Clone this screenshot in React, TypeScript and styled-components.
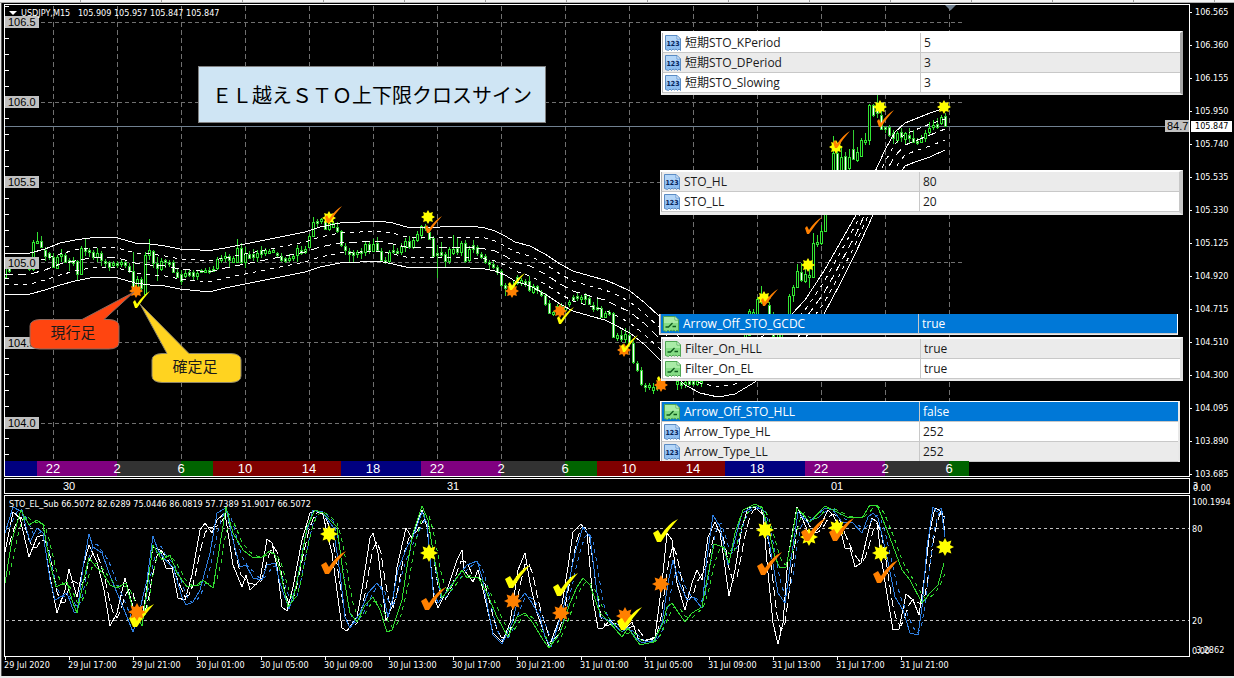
import React from 'react';
import styled, { createGlobalStyle } from 'styled-components';

const uiFont = '"DejaVu Sans Condensed", "DejaVu Sans", "Noto Sans", sans-serif';
const labelFont = '"Liberation Sans", Arial, sans-serif';
const tableFont = '"Open Sans", "Noto Sans CJK JP", sans-serif';
const jpFont = '"Noto Sans CJK JP", sans-serif';

const GlobalStyle = createGlobalStyle`
  *, *::before, *::after { box-sizing: border-box; }
  body { margin: 0; background: #e8e8e8; }
`;

/* ---------- price data: x, high, body top, body bottom, low, 1 = rising ---------- */

const candleData = `
5 268 268 277 278 1;9 268 268 271 273 0;29 266 267 269 271 0;33 240 242 269 271 1;37 232 241 243 244 1;41 236 241 247 248 0;45 247 250 256 261 0;49 252 253 257 260 0;
53 253 257 267 268 0;57 255 257 268 269 1;61 249 254 256 262 1;65 253 255 262 263 0;69 258 260 262 271 0;73 257 260 263 266 0;77 260 261 274 281 0;81 246 248 274 275 1;
85 239 248 251 256 0;89 248 250 252 257 0;93 250 252 257 260 0;97 248 253 257 262 1;101 251 253 260 266 0;105 259 261 263 267 0;109 261 262 267 271 0;113 261 263 265 268 1;
117 261 263 265 268 0;121 260 262 264 267 1;125 260 262 265 268 0;129 263 266 271 273 0;133 252 271 287 289 0;137 276 279 287 290 1;141 277 279 288 292 0;145 252 255 294 295 1;
149 239 250 255 260 1;153 250 251 263 268 0;157 257 263 268 281 0;161 258 261 269 271 1;165 259 260 262 268 0;169 260 262 264 267 0;173 260 262 272 273 0;177 269 272 277 278 0;
181 270 274 281 285 0;185 270 273 276 278 1;189 270 272 275 277 0;193 270 272 276 280 0;197 271 273 276 280 1;201 269 270 272 273 0;205 268 270 272 273 1;209 267 270 272 274 0;
213 266 269 271 272 1;217 257 259 268 270 1;221 255 258 260 263 1;225 252 256 258 262 1;229 254 256 260 267 0;233 256 258 262 263 1;237 239 248 262 263 1;241 243 248 262 265 0;
245 247 253 262 268 1;249 251 254 258 259 0;253 249 254 257 261 0;257 250 253 257 262 1;261 246 250 254 258 0;265 248 250 253 256 1;269 249 251 253 254 1;273 249 250 252 253 1;
277 252 253 255 258 0;281 253 256 260 262 0;285 257 258 261 263 0;289 254 258 260 262 1;293 255 256 258 261 1;297 245 248 255 262 1;301 246 250 253 255 0;305 246 249 252 254 1;
309 234 236 247 248 1;313 217 222 236 237 1;317 219 221 223 228 0;321 218 219 221 224 1;325 217 221 229 230 0;329 219 223 229 231 1;333 221 223 227 228 1;337 222 227 231 233 0;
341 230 231 245 247 0;345 243 246 250 255 0;349 248 251 254 263 0;353 250 252 255 262 0;357 250 252 254 258 1;361 248 251 253 259 0;365 242 244 252 256 1;369 241 244 250 254 0;
373 239 244 251 252 1;377 237 243 250 252 0;381 248 251 260 261 0;385 257 260 262 264 0;389 250 252 261 264 1;393 244 250 252 254 0;397 248 251 253 254 0;401 243 246 252 255 1;
405 238 241 247 252 1;409 236 241 247 249 0;413 238 240 247 249 1;417 231 234 240 242 1;421 225 226 235 239 1;425 224 226 228 231 0;429 228 232 239 240 0;433 236 238 256 257 0;
437 245 253 255 278 0;441 242 252 255 258 0;445 252 254 261 268 0;449 247 249 261 264 1;453 235 249 253 255 1;457 237 248 252 255 0;461 241 243 252 256 1;465 240 243 261 263 0;
469 246 249 260 262 1;473 240 245 249 253 0;477 245 247 253 256 0;481 252 254 257 259 0;485 254 256 262 264 0;489 260 262 264 269 0;493 261 264 267 269 0;497 265 267 272 275 0;
501 269 271 285 287 0;505 283 285 288 296 0;509 284 286 289 290 1;513 281 285 288 290 1;517 275 277 283 285 0;521 278 280 283 286 1;525 279 281 284 287 0;529 276 281 290 292 0;
533 284 286 292 294 1;537 285 286 290 294 0;541 290 292 295 297 0;545 293 295 304 306 0;549 300 303 313 314 0;553 311 312 314 316 1;557 304 306 312 314 1;561 303 306 312 314 0;565 305 307 310 312 1;
569 300 302 304 307 1;573 295 297 300 302 0;577 293 296 298 301 0;581 295 297 299 303 1;585 293 295 299 305 0;589 295 298 304 305 0;593 302 305 309 312 0;597 298 307 309 311 0;
601 306 308 317 318 0;605 311 313 317 318 1;609 310 312 314 316 0;613 312 313 337 338 0;617 333 335 338 341 1;621 330 335 339 342 0;625 328 334 339 343 1;629 330 335 343 345 0;
633 341 343 362 364 0;637 361 363 370 372 0;641 367 370 384 386 0;645 383 385 387 392 0;649 383 385 387 390 1;653 383 387 390 394 1;657 384 386 388 391 1;
677 379 381 384 390 1;681 379 382 385 389 0;685 380 382 384 388 1;689 379 381 384 386 0;693 379 381 384 386 0;697 379 381 384 386 1;701 379 381 383 387 1;
745 333 334 338 339 1;749 309 311 335 336 1;753 309 312 314 316 1;757 297 299 314 316 1;761 286 294 300 304 1;769 302 305 316 320 0;773 312 314 336 338 0;778 333 334 338 339 1;
781 333 334 338 339 1;789 294 296 314 316 1;793 285 287 295 302 1;797 264 271 287 288 1;801 263 272 280 282 0;805 269 274 281 283 1;809 269 275 277 288 1;813 233 243 277 278 1;
817 235 242 244 247 1;821 225 231 243 245 1;825 214 214 231 232 1;833 136 153 172 172 1;837 148 153 172 172 0;841 146 157 172 172 1;845 152 156 172 172 0;849 149 157 168 172 1;853 130 149 159 160 0;
857 147 152 160 162 1;861 138 140 156 157 1;865 133 140 142 145 1;869 104 105 140 145 1;873 104 105 115 117 0;877 95 105 113 118 0;881 110 115 129 130 0;885 126 127 129 133 0;
889 125 127 135 137 0;893 130 133 138 144 0;897 131 133 140 143 1;901 128 132 137 142 0;905 132 133 139 145 1;909 128 135 138 143 0;913 130 138 142 143 0;917 138 141 143 145 0;
921 135 138 142 143 1;925 130 133 138 142 1;929 122 128 132 135 1;933 120 125 127 130 1;937 118 124 127 129 0;941 115 117 123 125 1;945 113 116 126 127 0`;

const candles = candleData.split(';').map((c) => c.trim().split(' ').map(Number));

/* envelope: x, upper edge, lower edge */
const envelope = [
  [5, 253, 294], [30, 253, 294], [45, 249, 290], [60, 243, 285], [75, 240, 281], [90, 238, 278], [105, 237, 277],
  [118, 238, 278], [135, 243, 283], [150, 244, 285], [165, 246, 286], [180, 249, 289], [200, 250, 291], [213, 250, 291],
  [225, 248, 288], [245, 244, 284], [265, 240, 280], [285, 236, 276], [305, 232, 272], [320, 227, 267], [340, 223, 263],
  [360, 222, 262], [378, 221, 261], [393, 223, 264], [410, 228, 268], [440, 227, 267], [470, 226, 268], [485, 228, 269],
  [495, 231, 271], [505, 236, 275], [515, 242, 281], [530, 246, 286], [545, 254, 294], [560, 264, 304], [573, 271, 311],
  [590, 276, 316], [605, 280, 320], [615, 284, 325], [630, 291, 333], [645, 303, 345], [660, 317, 360], [673, 331, 373],
  [685, 343, 385], [700, 352, 393], [718, 356, 397], [735, 352, 394], [755, 341, 382], [775, 328, 364], [792, 314, 352],
  [805, 300, 338], [824, 271, 314], [840, 243, 284], [856, 215, 252], [873, 176, 215], [885, 150, 196], [895, 132, 180],
  [905, 123, 166], [915, 119, 162], [930, 113, 157], [945, 108, 150],
];

const envelopeLine = (t: number) =>
  envelope.map(([x, u, l]) => `${x},${Math.round(u + (l - u) * t)}`).join(' ');

/* oscillator curves: x y pairs */
const fastLine = `5 552;13 512;20 518;29 557;37 537;43 535;50 577;57 613;65 590;69 569;77 597;83 567;89 545;97 562;104 590;110 626;117 613;125 578;133 607;137 620;143 613;153 547;160 550;166 568;172 568;178 598;185 600;192 575;200 530;205 523;212 533;217 520;225 513;233 565;242 587;246 575;250 590;260 580;267 539;272 543;277 567;282 607;287 611;293 587;302 540;310 513;317 510;323 515;332 553;342 628;347 631;357 617;363 583;370 538;373 533;378 553;386 620;392 607;397 567;406 528;412 538;422 510;427 527;434 597;438 608;447 590;457 560;462 550;464 570;473 582;478 570;483 590;493 633;502 642;510 623;518 570;525 553;530 583;537 613;543 630;549 647;560 617;568 567;573 532;581 524;587 533;593 600;598 628;603 628;610 620;622 632;632 622;638 638;645 641;655 637;662 583;667 533;672 540;677 583;685 610;692 583;697 570;702 580;708 537;715 522;720 533;723 553;729 596;735 570;742 527;748 508;755 507;763 515;768 573;773 623;778 644;783 623;788 557;797 507;803 520;810 537;820 527;828 510;833 515;840 528;845 548;850 548;855 567;861 563;867 537;872 518;877 522;882 563;888 600;893 630;899 629;906 594;913 600;919 615;925 573;930 530;935 508;942 512;945 533`;
const midLine = `5 533;13 507;22 512;30 542;37 528;43 533;50 580;55 600;67 593;74 612;77 613;83 567;89 534;93 547;102 553;108 570;115 588;123 607;133 632;138 617;147 580;153 536;158 550;167 562;173 567;182 597;186 605;193 602;200 590;210 553;217 513;226 508;233 540;240 567;246 565;253 578;262 580;267 565;275 563;280 583;289 609;297 583;305 537;313 510;323 513;333 527;340 573;345 617;350 628;360 613;368 593;377 583;382 590;388 617;393 597;398 570;407 547;413 537;422 512;427 523;433 590;438 603;448 590;457 577;467 565;477 561;482 577;493 635;502 644;512 623;517 603;525 593;532 603;540 617;545 637;551 647;563 610;575 553;583 527;590 537;600 617;608 620;622 632;628 627;635 637;642 643;655 640;662 623;668 583;673 560;678 580;687 600;693 597;702 608;707 557;713 515;720 527;728 565;735 540;742 513;755 506;763 510;770 547;778 593;785 603;790 567;798 512;808 523;825 508;833 510;842 522;853 523;862 533;868 517;873 513;878 518;887 557;895 597;903 610;910 633;918 635;922 607;927 547;933 507;937 512;941 508;945 537`;
const slowLine = `5 583;12 540;21 510;29 525;37 520;43 525;50 563;56 587;67 582;73 603;77 613;83 583;89 558;97 568;103 573;110 585;117 588;126 583;133 610;142 626;147 590;153 545;162 560;170 555;177 573;187 587;197 585;203 580;213 588;218 557;226 507;233 533;243 550;252 557;262 557;270 551;275 555;280 570;288 607;293 600;300 567;307 527;315 510;323 513;337 527;343 573;350 613;357 622;365 605;373 597;380 610;387 632;392 630;402 600;407 567;413 533;422 506;428 520;434 557;442 598;450 588;462 570;467 578;478 577;487 593;497 617;508 637;517 617;525 613;533 623;543 640;549 648;560 633;570 603;577 587;583 578;590 585;600 613;610 623;622 637;628 628;640 645;653 642;663 623;667 607;672 603;678 612;685 622;692 613;702 607;707 580;714 544;723 547;729 563;735 533;743 510;755 504;762 508;768 527;775 557;780 568;786 567;792 537;797 508;810 522;825 506;837 512;847 517;862 518;870 505;877 505;887 530;902 570;910 580;922 603;930 593;938 585;944 563`;

type Point = [number, number];
const toPoints = (s: string): Point[] => s.split(';').map((p) => p.split(' ').map(Number) as Point);
const valueAt = (pts: Point[], x: number) => {
  const i = pts.findIndex((p) => p[0] >= x);
  if (i <= 0) return i === 0 ? pts[0][1] : pts[pts.length - 1][1];
  const [x0, y0] = pts[i - 1];
  const [x1, y1] = pts[i];
  return y0 + ((y1 - y0) * (x - x0)) / (x1 - x0);
};
/* signal line: moving average of the last bars */
const signalOf = (pts: Point[]) => {
  const out: string[] = [];
  for (let x = 9; x <= 945; x += 4) {
    const y = (valueAt(pts, x) + valueAt(pts, x - 4) + valueAt(pts, x - 8)) / 3;
    out.push(`${x},${Math.round(y)}`);
  }
  return out.join(' ');
};
const oscillators = [
  { data: toPoints(fastLine), color: '#ffffff' },
  { data: toPoints(midLine), color: '#2f7fe0' },
  { data: toPoints(slowLine), color: '#32dc32' },
];

/* ---------- signal marks ---------- */

const YELLOW = '#ffff00';
const ORANGE = '#ff8000';
const starPath = (r: number, inner: number) => {
  const pts: string[] = [];
  for (let i = 0; i < 16; i++) {
    const a = (Math.PI / 8) * i;
    const d = i % 2 ? inner : r;
    pts.push(`${(d * Math.sin(a)).toFixed(1)},${(-d * Math.cos(a)).toFixed(1)}`);
  }
  return `M${pts.join('L')}Z`;
};
const smallStar = starPath(7, 4.4);
const bigStar = starPath(9, 5.4);
const smallCheck = 'M-4,-6 L-2,-8 L0,-4 Q6,-13 13,-17 Q6,-9 0,0 L-2,0 Z';
const bigCheck = 'M-7,-9 L-2,-12 L1,-7 Q9,-19 18,-23 Q8,-12 1,0 L-3,0 Z';

type Mark = ['star' | 'check', string, number, number];
const priceMarks: Mark[] = [
  ['star', ORANGE, 136, 291], ['check', YELLOW, 137, 308],
  ['star', YELLOW, 329, 218], ['check', ORANGE, 329, 223],
  ['star', YELLOW, 428, 217], ['check', ORANGE, 429, 233],
  ['star', ORANGE, 512, 291], ['check', YELLOW, 512, 290],
  ['check', YELLOW, 561, 324], ['star', ORANGE, 560, 311],
  ['star', ORANGE, 624, 350], ['check', YELLOW, 625, 352],
  ['check', YELLOW, 661, 384], ['star', ORANGE, 661, 385],
  ['star', YELLOW, 764, 298], ['check', ORANGE, 765, 306],
  ['star', YELLOW, 808, 265], ['check', ORANGE, 809, 234],
  ['star', YELLOW, 836, 147], ['check', ORANGE, 837, 148],
  ['star', YELLOW, 880, 107], ['check', ORANGE, 881, 127],
  ['star', YELLOW, 944, 107],
];
const subMarks: Mark[] = [
  ['check', YELLOW, 136, 627], ['star', ORANGE, 137, 612],
  ['star', YELLOW, 329, 534], ['check', ORANGE, 328, 574],
  ['star', YELLOW, 429, 553], ['check', ORANGE, 428, 610],
  ['star', ORANGE, 513, 601], ['check', YELLOW, 512, 588],
  ['star', ORANGE, 561, 613], ['check', YELLOW, 560, 596],
  ['star', ORANGE, 625, 616], ['check', YELLOW, 624, 630],
  ['star', ORANGE, 661, 584], ['check', YELLOW, 660, 542],
  ['star', YELLOW, 765, 530], ['check', ORANGE, 764, 575],
  ['star', YELLOW, 809, 537], ['check', ORANGE, 808, 541],
  ['star', YELLOW, 837, 528], ['check', ORANGE, 836, 541],
  ['star', YELLOW, 881, 553], ['check', ORANGE, 880, 583],
  ['star', YELLOW, 945, 547],
];

const Marks = ({ items, big }: { items: Mark[]; big?: boolean }) => (
  <>
    {items.map(([kind, color, x, y], i) => (
      <path
        key={i}
        transform={`translate(${x},${y})`}
        fill={color}
        d={kind === 'star' ? (big ? bigStar : smallStar) : big ? bigCheck : smallCheck}
      />
    ))}
  </>
);

/* ---------- layout ---------- */

const Page = styled.main`
  min-width: 1234px;
  background: #e8e8e8;
  padding: 0 0 1px 2px;
  font-family: ${uiFont};
`;
const TopStrip = styled.div`
  height: 3px;
  margin-left: -2px;
  background: repeating-linear-gradient(90deg, #f4f4f4 0 80px, #a0a0a0 80px 81px);
  border-bottom: 1px solid #b0b0b0;
`;
const ChartWindow = styled.div`
  background: #000;
  color: #fff;
  padding: 1px 0 0 2px;
  border-left: 1px solid #555;
  margin-left: -1px;
`;
const PanelRow = styled.div`
  display: grid;
  grid-template-columns: minmax(0, 1fr) 44px;
  margin-bottom: 1px;
`;
/* drawing and captions share one grid cell, so captions lie over the chart */
const Panel = styled.section`
  position: relative;
  display: grid;
  grid-template-columns: minmax(0, 1fr);
  border: 1px solid #fff;
  overflow: hidden;
`;
const Canvas = styled.svg<{ $h: number }>`
  grid-area: 1 / 1;
  display: block;
  width: 100%;
  height: ${(p) => p.$h}px;
`;
const Caption = styled.header`
  grid-area: 1 / 1;
  align-self: start;
  z-index: 1;
  display: flex;
  align-items: center;
  gap: 4px;
  padding: 2px 4px;
`;
const PanelTitle = styled.h1`
  margin: 0;
  font: 400 9px/12px ${uiFont};
  white-space: pre;
`;
const MenuArrow = styled.svg`
  width: 8px;
  height: 4px;
`;
const PriceTags = styled.div`
  grid-area: 1 / 1;
  align-self: start;
  justify-self: start;
  display: flex;
  flex-direction: column;
  justify-content: space-between;
  height: 424px;
  padding-top: 11px;
`;
const PriceTag = styled.span`
  width: 34px;
  height: 12px;
  background: #c0c0c0;
  color: #000;
  font: 11px/12px ${labelFont};
  padding-left: 3px;
`;
const PercentTag = styled(PriceTag)`
  position: absolute;
  top: 115px;
  right: 0;
  width: 24px;
  padding-left: 2px;
`;
const SessionBar = styled.div`
  position: relative;
  display: flex;
  height: 15px;
`;
const Session = styled.div<{ $w: number; $c: string }>`
  width: ${(p) => p.$w}px;
  background: ${(p) => p.$c};
`;
const HourLabels = styled.div`
  position: absolute;
  inset: 0;
  display: flex;
  padding-left: 16px;
  font: 13px/16px ${labelFont};
  text-align: center;
`;
const HourLabel = styled.span`
  flex: none;
  width: 64px;
`;
const DayBar = styled.div`
  display: flex;
  height: 14px;
  padding-left: 58px;
  font: 11px/15px ${labelFont};
`;
const DayLabel = styled.span`
  flex: none;
  width: 384px;
`;
const Scale = styled.div`
  position: relative;
  display: flex;
  flex-direction: column;
  justify-content: space-between;
  padding-top: 2px;
  margin-bottom: -3px;
  font: 9px/12px ${uiFont};
`;
const ScaleLabel = styled.span`
  display: flex;
  align-items: center;
  gap: 3px;
  height: 12px;
  &::before {
    content: '';
    width: 2px;
    height: 1px;
    background: #fff;
  }
`;
const DayScale = styled.div`
  display: grid;
  padding: 2px 0 0 3px;
  font: 9px/12px ${uiFont};
  height: 16px;
`;
const SubScale = styled.div`
  display: grid;
  grid-template-rows: 27px 92px 29px 13px;
  padding: 1px 0 0 2px;
  font: 9px/12px ${uiFont};
`;
const Stacked = styled.span<{ $row: number; $end?: boolean }>`
  grid-area: ${(p) => p.$row} / 1;
  align-self: ${(p) => (p.$end ? 'end' : 'start')};
  justify-self: start;
`;
const StackedWide = styled(Stacked)`
  padding-left: 4px;
`;
const BidPrice = styled.output`
  position: absolute;
  top: 117px;
  left: 1px;
  width: 41px;
  height: 11px;
  padding-left: 4px;
  background: #fff;
  color: #000;
  line-height: 11px;
`;
const TimeAxis = styled.footer`
  display: flex;
  height: 19px;
  margin-top: -1px;
  padding-left: 1px;
  font: 9px/16px ${uiFont};
`;
const TimeLabel = styled.time`
  flex: none;
  width: 64px;
  white-space: nowrap;
  text-indent: -1px;
  background: linear-gradient(#fff, #fff) 0 0 / 1px 3px no-repeat;
`;
const Banner = styled.div`
  position: absolute;
  left: 193px;
  top: 61px;
  padding: 13px;
  border: 1px solid #808080;
  background: #cfe5f4;
  color: #000;
  font: 20px/29px ${jpFont};
  white-space: nowrap;
`;

/* ---------- parameter tables ---------- */

const ParamTable = styled.table<{ $x: number; $y: number; $w: number; $edge: string; $edgeW: number; $top: number; $foot: number }>`
  position: absolute;
  left: ${(p) => p.$x}px;
  top: ${(p) => p.$y}px;
  width: ${(p) => p.$w}px;
  table-layout: fixed;
  border-collapse: separate;
  border-spacing: 0;
  border-top: ${(p) => p.$top}px solid #fff;
  border-right: ${(p) => p.$edgeW}px solid ${(p) => p.$edge};
  border-bottom: ${(p) => p.$foot}px solid #ebebeb;
  border-left: 1px solid #fff;
  background: #fff;
  color: #1a1a1a;
  font: 12px/19px ${tableFont};
`;
const ParamRow = styled.tr<{ $tone: 'white' | 'gray' | 'blue' }>`
  height: 20px;
  background: ${(p) => ({ white: '#fff', gray: '#ebebeb', blue: '#0078d7' })[p.$tone]};
  color: ${(p) => (p.$tone === 'blue' ? '#fff' : 'inherit')};
`;
const ParamName = styled.th`
  width: 259px;
  padding: 0;
  height: 20px;
  border-right: 1px solid #c8c8c8;
  border-bottom: 1px solid #c8c8c8;
  border-left: 1px solid #b0b0b0;
  font-weight: 400;
  text-align: left;
`;
const NameInner = styled.span`
  display: flex;
  align-items: center;
  gap: 4px;
  height: 19px;
  padding-left: 2px;
  white-space: nowrap;
`;
const ParamValue = styled.td`
  padding: 0 0 0 3px;
  height: 20px;
  border-bottom: 1px solid #c8c8c8;
`;

const NumberIcon = () => (
  <svg width="16" height="16" viewBox="0 0 16 16" aria-hidden="true">
    <path d="M.5 .5H12L15.500 4V15.500l-1.500-1.500-1.500 1.500-1.500-1.500-1.500 1-1.500-1-1.500 1.500L5 14 3.500 15.500l-3-1Z" fill="#8dbdf0" stroke="#5b8cc4" />
    <path d="M1 1h10.500v3.500H15v2.500H1Z" fill="#b4d6f8" />
    <path d="M12 .5V4h3.500Z" fill="#e4f1ff" stroke="#5b8cc4" strokeWidth=".6" />
    <text x="8" y="11" textAnchor="middle" fontFamily="DejaVu Sans Condensed" fontWeight="700" fontSize="7" fill="#06245a">123</text>
  </svg>
);
const SwitchIcon = () => (
  <svg width="16" height="16" viewBox="0 0 16 16" aria-hidden="true">
    <path d="M.5 .5H12L15.500 4V15.500l-1.500-1.500-1.500 1.500-1.500-1.500-1.500 1-1.500-1-1.500 1.500L5 14 3.500 15.500l-3-1Z" fill="#86dc86" stroke="#4fa653" />
    <path d="M1 1h10.500v3.500H15v2.500H1Z" fill="#a9eba6" />
    <path d="M12 .5V4h3.500Z" fill="#e2fbe2" stroke="#4fa653" strokeWidth=".6" />
    <path d="M2.500 11h3L9.500 7M9.500 10.500h3.500" fill="none" stroke="#0d5a1c" strokeWidth="1.300" />
  </svg>
);

type Param = { kind: 'num' | 'bool'; name: string; value: string; tone: 'white' | 'gray' | 'blue' };
type ParamGroup = { x: number; y: number; w: number; edge: string; edgeW: number; top: number; foot: number; rows: Param[] };

const groups: ParamGroup[] = [
  {
    x: 656, y: 26, w: 522, edge: '#a6a6a6', edgeW: 3, top: 2, foot: 2,
    rows: [
      { kind: 'num', name: '短期STO_KPeriod', value: '5', tone: 'white' },
      { kind: 'num', name: '短期STO_DPeriod', value: '3', tone: 'gray' },
      { kind: 'num', name: '短期STO_Slowing', value: '3', tone: 'white' },
    ],
  },
  {
    x: 655, y: 165, w: 523, edge: '#c8c8c8', edgeW: 4, top: 2, foot: 3,
    rows: [
      { kind: 'num', name: 'STO_HL', value: '80', tone: 'gray' },
      { kind: 'num', name: 'STO_LL', value: '20', tone: 'white' },
    ],
  },
  {
    x: 654, y: 309, w: 519, edge: '#ffffff', edgeW: 1, top: 0, foot: 1,
    rows: [{ kind: 'bool', name: 'Arrow_Off_STO_GCDC', value: 'true', tone: 'blue' }],
  },
  {
    x: 656, y: 332, w: 522, edge: '#e0e0e0', edgeW: 3, top: 2, foot: 2,
    rows: [
      { kind: 'bool', name: 'Filter_On_HLL', value: 'true', tone: 'gray' },
      { kind: 'bool', name: 'Filter_On_EL', value: 'true', tone: 'white' },
    ],
  },
  {
    x: 655, y: 396, w: 520, edge: '#e8e8e8', edgeW: 2, top: 1, foot: 0,
    rows: [
      { kind: 'bool', name: 'Arrow_Off_STO_HLL', value: 'false', tone: 'blue' },
      { kind: 'num', name: 'Arrow_Type_HL', value: '252', tone: 'white' },
      { kind: 'num', name: 'Arrow_Type_LL', value: '252', tone: 'gray' },
    ],
  },
];

const Params = ({ group }: { group: ParamGroup }) => (
  <ParamTable $x={group.x} $y={group.y} $w={group.w} $edge={group.edge} $edgeW={group.edgeW} $top={group.top} $foot={group.foot}>
    <tbody>
      {group.rows.map((r) => (
        <ParamRow key={r.name} $tone={r.tone}>
          <ParamName scope="row">
            <NameInner>
              {r.kind === 'num' ? <NumberIcon /> : <SwitchIcon />}
              {r.name}
            </NameInner>
          </ParamName>
          <ParamValue>{r.value}</ParamValue>
        </ParamRow>
      ))}
    </tbody>
  </ParamTable>
);

/* ---------- chart contents ---------- */

const hourXs = Array.from({ length: 15 }, (_, i) => 53 + i * 64);
const gridYs = [22, 102, 182, 262, 342, 423];
const tickYs = Array.from({ length: 29 }, (_, i) => 6 + i * 16);
const priceTags = ['106.5', '106.0', '105.5', '105.0', '104.5', '104.0'];
const scaleLabels = ['106.565', '106.360', '106.155', '105.950', '105.740', '105.535', '105.330', '105.125', '104.920', '104.715', '104.510', '104.300', '104.095', '103.890', '103.685'];
const hours = ['22', '2', '6', '10', '14', '18', '22', '2', '6', '10', '14', '18', '22', '2', '6'];
const NAVY = '#000080';
const PURPLE = '#800080';
const DIM = '#323232';
const GREEN = '#006400';
const MAROON = '#800000';
const sessions: [number, string][] = [
  [32, NAVY], [80, PURPLE], [64, DIM], [32, GREEN], [128, MAROON], [80, NAVY], [80, PURPLE], [64, DIM],
  [32, GREEN], [128, MAROON], [80, NAVY], [80, PURPLE], [64, DIM], [20, GREEN],
];
const times = ['29 Jul 2020', '29 Jul 17:00', '29 Jul 21:00', '30 Jul 01:00', '30 Jul 05:00', '30 Jul 09:00', '30 Jul 13:00', '30 Jul 17:00', '30 Jul 21:00', '31 Jul 01:00', '31 Jul 05:00', '31 Jul 09:00', '31 Jul 13:00', '31 Jul 17:00', '31 Jul 21:00'];

const PriceChart = () => (
  <Canvas $h={456} role="img" aria-label="USDJPY M15">
    <g transform="translate(-5,-5)">
      <g shapeRendering="crispEdges" fill="none">
        {hourXs.map((x) => (
          <line key={x} x1={x + 0.5} x2={x + 0.5} y1={6} y2={461} stroke="#707070" strokeDasharray="5 3" />
        ))}
        {gridYs.map((y) => (
          <line key={y} x1={41} x2={962} y1={y + 0.5} y2={y + 0.5} stroke="#707070" strokeDasharray="4 3" />
        ))}
        {tickYs.map((y) => (
          <line key={y} x1={5} x2={9} y1={y + 0.5} y2={y + 0.5} stroke="#fff" />
        ))}
        <line x1="0" x2="100%" y1={126.5} y2={126.5} stroke="#708090" />
        {candles.map(([x, h, t, b, l, up]) => (
          <g key={x} stroke={up ? '#32e632' : '#32cd32'}>
            <line x1={x + 0.5} x2={x + 0.5} y1={h} y2={l} />
            <rect x={x - 0.5} y={t + 0.5} width={2} height={Math.max(1, b - t)} fill={up ? '#000' : '#fff'} />
          </g>
        ))}
        <polyline points={envelopeLine(0)} stroke="#fff" />
        <polyline points={envelopeLine(0.25)} stroke="#fff" strokeDasharray="4 5" />
        <polyline points={envelopeLine(0.5)} stroke="#fff" strokeDasharray="8 5" />
        <polyline points={envelopeLine(0.75)} stroke="#fff" strokeDasharray="4 5" />
        <polyline points={envelopeLine(1)} stroke="#fff" />
      </g>
      <path d="M945 5h11l-5.500 5.500Z" fill="#708090" />
      <Marks items={priceMarks} />
    </g>
  </Canvas>
);

const CalloutLayer = styled.svg`
  position: absolute;
  left: 0;
  top: 270px;
  width: 260px;
  height: 120px;
  font: 15px ${jpFont};
`;
const Callouts = () => (
  <CalloutLayer>
    <g transform="translate(-5,-275)">
      <path
        d="M40 319.500H82L134 292 104 319.500H109Q119 320 119 326V342Q119 349 109 349H40Q30 349 30 342V326Q30 320 40 319.500Z"
        fill="#ff4510" stroke="#8a6a60"
      />
      <text x="73" y="338" textAnchor="middle" fill="#1a1a1a">現行足</text>
      <path
        d="M162 353.500H167L140 304 189 353.500H231Q241 354 241 360V376Q241 382 231 382.500H162Q152 382 152 376V360Q152 354 162 353.500Z"
        fill="#ffd320" stroke="#8c8468"
      />
      <text x="195" y="372" textAnchor="middle" fill="#1a1a1a">確定足</text>
    </g>
  </CalloutLayer>
);

const SubChart = () => (
  <Canvas $h={160} role="img" aria-label="STO_EL_Sub">
    <g transform="translate(-5,-496)">
      <g shapeRendering="crispEdges" fill="none">
        <line x1="6" x2="101%" y1="528.5" y2="528.5" stroke="#c0c0c0" strokeDasharray="3 3" />
        <line x1="6" x2="101%" y1="620.5" y2="620.5" stroke="#c0c0c0" strokeDasharray="3 3" />
        {oscillators.map(({ data, color }) => (
          <g key={color} stroke={color}>
            <polyline points={signalOf(data)} strokeDasharray={color === '#ffffff' ? '9 4' : '4 4'} />
            <polyline points={data.map((p) => p.join(',')).join(' ')} />
          </g>
        ))}
      </g>
      <Marks items={subMarks} big />
    </g>
  </Canvas>
);

export default function App() {
  return (
    <Page>
      <GlobalStyle />
      <TopStrip />
      <ChartWindow>
        <PanelRow>
          <Panel>
            <PriceChart />
            <PriceTags>
              {priceTags.map((t) => (
                <PriceTag key={t}>{t}</PriceTag>
              ))}
            </PriceTags>
            <Caption>
              <MenuArrow viewBox="0 0 8 4" aria-hidden="true"><path d="M0 0h8L4 4Z" fill="#fff" /></MenuArrow>
              <PanelTitle>USDJPY,M15{'   '}105.909 105.957 105.847 105.847</PanelTitle>
            </Caption>
            <PercentTag>84.7</PercentTag>
            <Banner>ＥＬ越えＳＴＯ上下限クロスサイン</Banner>
            <Callouts />
            {groups.map((g) => (
              <Params key={g.y} group={g} />
            ))}
            <SessionBar>
              {sessions.map(([w, c], i) => (
                <Session key={i} $w={w} $c={c} />
              ))}
              <HourLabels>
                {hours.map((h, i) => (
                  <HourLabel key={i}>{h}</HourLabel>
                ))}
              </HourLabels>
            </SessionBar>
          </Panel>
          <Scale>
            {scaleLabels.map((s) => (
              <ScaleLabel key={s}>{s}</ScaleLabel>
            ))}
            <BidPrice>105.847</BidPrice>
          </Scale>
        </PanelRow>
        <PanelRow>
          <Panel>
            <DayBar>
              <DayLabel>30</DayLabel>
              <DayLabel>31</DayLabel>
              <DayLabel>01</DayLabel>
            </DayBar>
          </Panel>
          <DayScale>
            <Stacked $row={1}>3</Stacked>
            <Stacked $row={1} $end>0.00</Stacked>
          </DayScale>
        </PanelRow>
        <PanelRow>
          <Panel>
            <SubChart />
            <Caption>
              <PanelTitle as="h2">STO_EL_Sub 66.5072 82.6289 75.0446 86.0819 57.7389 51.9017 66.5072</PanelTitle>
            </Caption>
          </Panel>
          <SubScale>
            <Stacked $row={1}>100.1994</Stacked>
            <Stacked $row={2}>80</Stacked>
            <Stacked $row={3}>20</Stacked>
            <Stacked $row={4} $end>0.00</Stacked>
            <StackedWide $row={4}>3.2862</StackedWide>
          </SubScale>
        </PanelRow>
        <TimeAxis>
          {times.map((t) => (
            <TimeLabel key={t}>{t}</TimeLabel>
          ))}
        </TimeAxis>
      </ChartWindow>
    </Page>
  );
}
